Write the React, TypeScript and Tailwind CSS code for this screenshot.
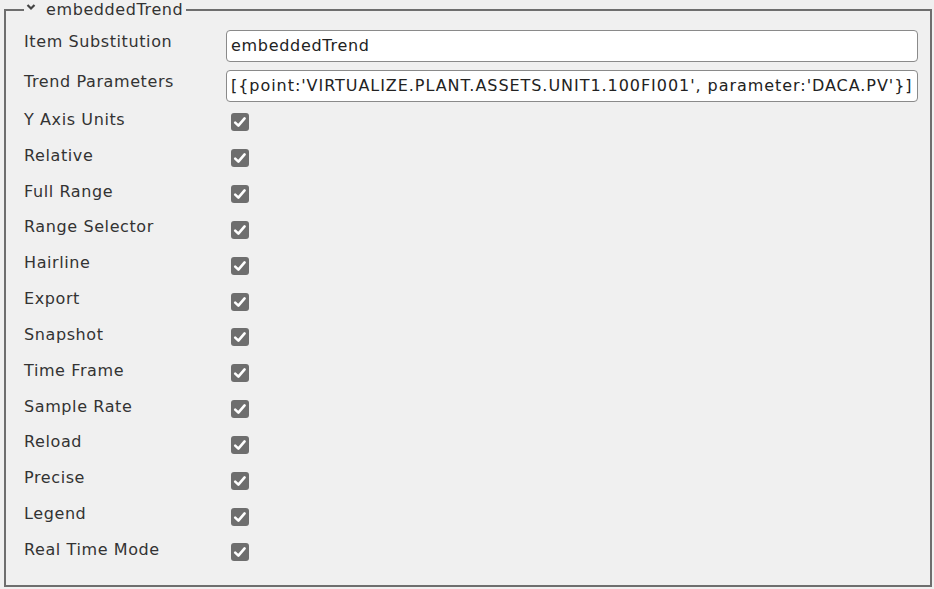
import type { ReactNode } from "react";

const checkRows = [
    "Y Axis Units",
    "Relative",
    "Full Range",
    "Range Selector",
    "Hairline",
    "Export",
    "Snapshot",
    "Time Frame",
    "Sample Rate",
    "Reload",
    "Precise",
    "Legend",
    "Real Time Mode",
];

function Check() {
    return (
        <span className="inline-flex w-[18px] h-[18px] rounded-[3px] bg-[#6e6e6e] items-center justify-center">
            <svg width="18" height="18" viewBox="0 0 18 18">
                <path d="M4.2 9.6 L7.4 12.6 L13.6 5.4" fill="none" stroke="#fff" strokeWidth="2.6" strokeLinecap="round" strokeLinejoin="round" />
            </svg>
        </span>
    );
}

function Row({ label, children, className }: { label: string; children: ReactNode; className: string }) {
    return (
        <div className={`flex ${className}`}>
            <div className="w-[202px] shrink-0 text-[#333] tracking-[0.6px]">{label}</div>
            <div className="flex-1">{children}</div>
        </div>
    );
}

export default function App() {
    return (
        <div className="w-[934px] h-[589px] bg-[#f0f0f0] px-[4px] font-['DejaVu_Sans',sans-serif] text-[16px]">
            <fieldset className="border-2 border-[#6e6e6e] h-[587px] pl-[18px] pr-[12px] pt-0">
                <legend className="pl-[2px] pr-[3px] flex items-center gap-[10px] text-[#333] leading-[20px] tracking-[0.6px]">
                    <svg width="10" height="8" viewBox="0 0 10 8" className="mt-[-6px]">
                        <path d="M1.5 2 L5 5.5 L8.5 2" fill="none" stroke="#444" strokeWidth="2.2" />
                    </svg>
                    <span>embeddedTrend</span>
                </legend>
                <div className="mt-[10px] flex flex-col">
                    <Row label="Item Substitution" className="h-[40px]">
                        <div className="h-[32px] bg-white border border-[#8a8a8a] rounded-[4px] px-[4px] flex items-center text-[#222] tracking-[0.7px]">
                            embeddedTrend
                        </div>
                    </Row>
                    <Row label="Trend Parameters" className="h-[32px]">
                        <div className="h-[32px] bg-white border border-[#8a8a8a] rounded-[4px] px-[4px] flex items-center text-[#222] whitespace-nowrap overflow-hidden tracking-[0.95px]">
                            [{"{"}point:'VIRTUALIZE.PLANT.ASSETS.UNIT1.100FI001', parameter:'DACA.PV'{"}"}]
                        </div>
                    </Row>
                    {checkRows.map((r) => (
                        <Row key={r} label={r} className="h-[35.83px] items-center">
                            <div className="pl-[5px] pt-[5px] flex">
                                <Check />
                            </div>
                        </Row>
                    ))}
                </div>
            </fieldset>
        </div>
    );
}
